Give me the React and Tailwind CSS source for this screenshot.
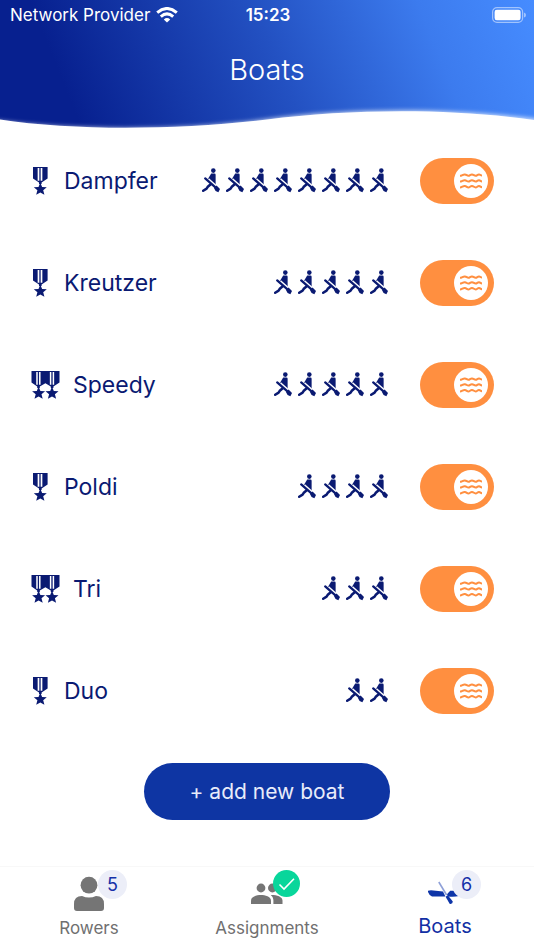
import React, { useState } from "react";

const BOATS = [
  { name: "Dampfer", medals: 1, seats: 8 },
  { name: "Kreutzer", medals: 1, seats: 5 },
  { name: "Speedy", medals: 2, seats: 5 },
  { name: "Poldi", medals: 1, seats: 4 },
  { name: "Tri", medals: 2, seats: 3 },
  { name: "Duo", medals: 1, seats: 2 },
];

const STAR = "M0 -6.6 1.8 -2.2 6.5 -2 2.9 1 4.1 5.6 0 3.2 -4.1 5.6 -2.9 1 -6.5 -2 -1.8 -2.2Z";

function Medal() {
  return (
    <svg className="h-7 w-5" viewBox="0 0 20 28" fill="#0a1a72" aria-hidden="true">
      <path d="M2 0H16.6V11.6L10.6 15.6V17H8V15.6L2 11.6Z" />
      <path d="M7.500 1V13.800M10.500 1V13.800" fill="none" stroke="#fff" strokeWidth="1.700" />
      <path d={STAR} transform="translate(9.3 22.2)" />
    </svg>
  );
}

function DoubleMedal() {
  return (
    <svg className="h-7 w-[29px]" viewBox="0 0 29 28" fill="#0a1a72" aria-hidden="true">
      <path d="M.5 0H28.5V11.6L22.4 15.6V17H19.8V15.6L14.4 12.2 8.8 15.6V17H6.2V15.6L.5 11.6Z" />
      <path d="M6 1V13.800M8.800 1V13.800M19.600 1V13.800M22.400 1V13.800" fill="none" stroke="#fff" strokeWidth="1.500" />
      <path d={STAR} transform="translate(7.6 22.2)" />
      <path d={STAR} transform="translate(21 22.2)" />
    </svg>
  );
}

function Rower() {
  return (
    <svg className="h-[26px] w-[18px]" viewBox="0 0 18 26" fill="#0a1a72" aria-hidden="true">
      <circle cx="11.3" cy="2.6" r="2.3" />
      <path d="M9.200 5.600H12.400Q13.600 5.600 13.600 6.800V16.800H11.400L5.600 11.600Z" />
      <path d="M9 16 5.800 18.800 4.600 20.600 1.200 22.800" fill="none" stroke="#0a1a72" strokeWidth="2.500" strokeLinecap="round" strokeLinejoin="round" />
      <path d="M6 11.400 13 17.600" fill="none" stroke="#fff" strokeWidth="3" />
      <path d="M3.200 10.400 14.600 20.400" fill="none" stroke="#0a1a72" strokeWidth="2.300" strokeLinecap="round" />
      <path d="M12 20 14.600 17.400 18 21 16.400 24.200 13.600 23Z" />
    </svg>
  );
}

function Waves() {
  return (
    <svg className="h-4 w-[22px]" viewBox="0 0 22 16" fill="none" stroke="#ff8f40" strokeWidth="2" aria-hidden="true">
      <path d="M0 2.800C2 2.800 3 1.200 4.800 1.400S7 2.800 8.400 2.800 10.400 1.300 12 1.400 14.200 2.800 15.600 2.800 17.600 1.300 19 1.400 20.600 2.600 22 2.600" />
      <path d="M0 8.600C2 8.600 3 7 4.800 7.200S7 8.600 8.400 8.600 10.400 7.100 12 7.200 14.200 8.600 15.600 8.600 17.600 7.100 19 7.200 20.600 8.400 22 8.400" />
      <path d="M0 14.400C2 14.400 3 12.800 4.800 13S7 14.400 8.400 14.400 10.400 12.900 12 13 14.200 14.400 15.600 14.400 17.600 12.900 19 13 20.600 14.200 22 14.200" />
    </svg>
  );
}

function Toggle({ label }) {
  const [on, setOn] = useState(true);
  return (
    <label className="grid h-[46px] w-[74px] shrink-0 cursor-pointer items-center">
      <input
        type="checkbox"
        role="switch"
        aria-label={label}
        checked={on}
        onChange={() => setOn(!on)}
        className="peer col-start-1 row-start-1 h-full w-full cursor-pointer appearance-none rounded-full bg-gray-300 checked:bg-[#ff8f40]"
      />
      <span className="pointer-events-none col-start-1 row-start-1 mx-1.5 flex size-[34px] items-center justify-center justify-self-start rounded-full bg-white peer-checked:justify-self-end">
        <Waves />
      </span>
    </label>
  );
}

function BoatRow({ boat }) {
  return (
    <li className="flex items-center text-[#0a1a72]">
      <div className="flex items-center gap-[13px]">
        {boat.medals === 2 ? <DoubleMedal /> : <Medal />}
        <span className="text-[23px] leading-8">{boat.name}</span>
      </div>
      <div className="mr-8 ml-auto flex gap-1.5" role="img" aria-label={boat.seats + " seats"}>
        {Array.from({ length: boat.seats }, (_, i) => (
          <Rower key={i} />
        ))}
      </div>
      <Toggle label={boat.name + " on water"} />
    </li>
  );
}

function Header() {
  return (
    <header className="bg-[linear-gradient(68deg,#07208f_14%,#2351c2_52%,#3c7bee_80%,#468cff_100%)] text-white">
      <div className="grid h-[30px] grid-cols-3 items-center pr-2 pl-2.5">
        <div className="flex items-center gap-1.5 whitespace-nowrap text-[17px] leading-5">
          Network Provider
          <svg className="h-4 w-[22px] shrink-0" viewBox="0 0 22 16" fill="none" stroke="#fff" strokeWidth="3" aria-label="Wi-Fi">
            <path d="M1.2 5.6Q11 -2.6 20.8 5.6" />
            <path d="M4.8 9.6Q11 4.2 17.2 9.6" />
            <path d="M11 15.6 7.8 12.4Q11 9.8 14.2 12.4Z" fill="#fff" stroke="none" />
          </svg>
        </div>
        <time className="text-center text-[17px] leading-5 font-semibold">15:23</time>
        <svg className="h-4 w-[34px] justify-self-end" viewBox="0 0 34 16" aria-label="Battery full">
          <rect x=".6" y=".6" width="30" height="14.8" rx="4.4" fill="none" stroke="#fff" strokeOpacity=".5" strokeWidth="1.2" />
          <rect x="2.6" y="2.8" width="26" height="10.4" rx="2.2" fill="#fff" />
          <path d="M32 5.4Q34 6 34 8T32 10.6Z" fill="#fff" fillOpacity=".5" />
        </svg>
      </div>
      <h1 className="pt-5 text-center text-[29px] leading-10 font-light">Boats</h1>
      <svg className="mt-4 block h-6 w-full" viewBox="0 0 534 24" preserveAspectRatio="none" aria-hidden="true">
        <defs>
          <filter id="wave-glow" x="-5%" y="-50%" width="110%" height="200%">
            <feGaussianBlur stdDeviation="2" />
          </filter>
        </defs>
        <path d="M-20 12C62 25 180 25 267 13 350 2 450 1 554 15V40H-20Z" fill="#fff" fillOpacity=".75" filter="url(#wave-glow)" />
        <path d="M0 13.500C75 25 180 24 267 13.500 350 3 450 2 534 14V24H0Z" fill="#fff" />
      </svg>
    </header>
  );
}

function Badge({ children }) {
  return (
    <span className="absolute -top-1.5 left-[24px] flex size-[29px] items-center justify-center rounded-full bg-[#eceef8] text-lg text-[#1530a8]">
      {children}
    </span>
  );
}

function TabBar() {
  return (
    <nav className="mt-auto grid grid-cols-3 border-t border-[#f8f8f8] bg-white pt-[9px] pb-2.5">
      <a href="#rowers" className="flex flex-col items-center text-[#707070]">
        <span className="relative">
          <svg className="h-9 w-[30px]" viewBox="0 0 30 36" fill="#757575" aria-hidden="true">
            <circle cx="15" cy="9.200" r="8.400" />
            <path d="M0 32V28Q0 20 8 20 11.500 21.600 15 21.600T22 20Q30 20 30 28V32Q30 35 27 35H3Q0 35 0 32Z" />
          </svg>
          <Badge>5</Badge>
        </span>
        <span className="mt-1 text-[17px] leading-6">Rowers</span>
      </a>
      <a href="#assignments" className="flex flex-col items-center text-[#707070]">
        <span className="relative">
          <svg className="h-9 w-8" viewBox="0 0 32 36" fill="#757575" aria-hidden="true">
            <circle cx="10" cy="12" r="4.400" />
            <circle cx="21.400" cy="12" r="4.400" />
            <path d="M0 28V24.500C0 20.600 6 19 10 19S20 20.600 20 24.500V28Z" />
            <path d="M20.600 19C26 19 31.500 20.800 31.500 24.500V28H22.400V24.500C22.400 22.200 21.600 20.600 19.800 19.200Z" />
          </svg>
          <svg className="absolute -top-1.5 left-[22px] size-[27px]" viewBox="0 0 27 27" aria-label="Complete">
            <circle cx="13.500" cy="13.500" r="13.500" fill="#09d69b" />
            <path d="M6.500 14.500 11 19 21 8.800" fill="none" stroke="#fff" strokeWidth="1.600" />
          </svg>
        </span>
        <span className="mt-1 text-[17px] leading-6">Assignments</span>
      </a>
      <a href="#boats" aria-current="page" className="flex flex-col items-center text-[#1230a4]">
        <span className="relative">
          <svg className="h-9 w-[34px]" viewBox="0 0 34 36" fill="#0e35a8" aria-hidden="true">
            <path d="M-.4 14.800 3 14.200 15 15.600 17.400 20.600H4Q1 19.400 -.4 14.800Z" />
            <path d="M20 20.400 19 18.200 22.200 14.800H28L31 20Q26 21 20 20.400Z" />
            <path d="M10.800 6 18.600 19" stroke="#8fa0d8" strokeWidth="1.600" />
            <path d="M17.600 20.800 19.800 19.200 24.800 25.600Q24.800 28.400 21.800 28Z" />
          </svg>
          <Badge>6</Badge>
        </span>
        <span className="mt-0.5 text-xl leading-6">Boats</span>
      </a>
    </nav>
  );
}

export default function App() {
  return (
    <div className="flex min-h-screen flex-col bg-white font-['Inter','Liberation_Sans',sans-serif]">
      <Header />
      <main className="flex flex-col items-center pt-7">
        <ul className="flex w-full flex-col gap-14 pr-10 pl-[31px]">
          {BOATS.map((boat) => (
            <BoatRow key={boat.name} boat={boat} />
          ))}
        </ul>
        <button type="button" className="mt-[49px] mb-8 h-[57px] rounded-full bg-[#0e35a3] px-[46px] text-[21px] text-[#e8ecfa]">
          + add new boat
        </button>
      </main>
      <TabBar />
    </div>
  );
}
